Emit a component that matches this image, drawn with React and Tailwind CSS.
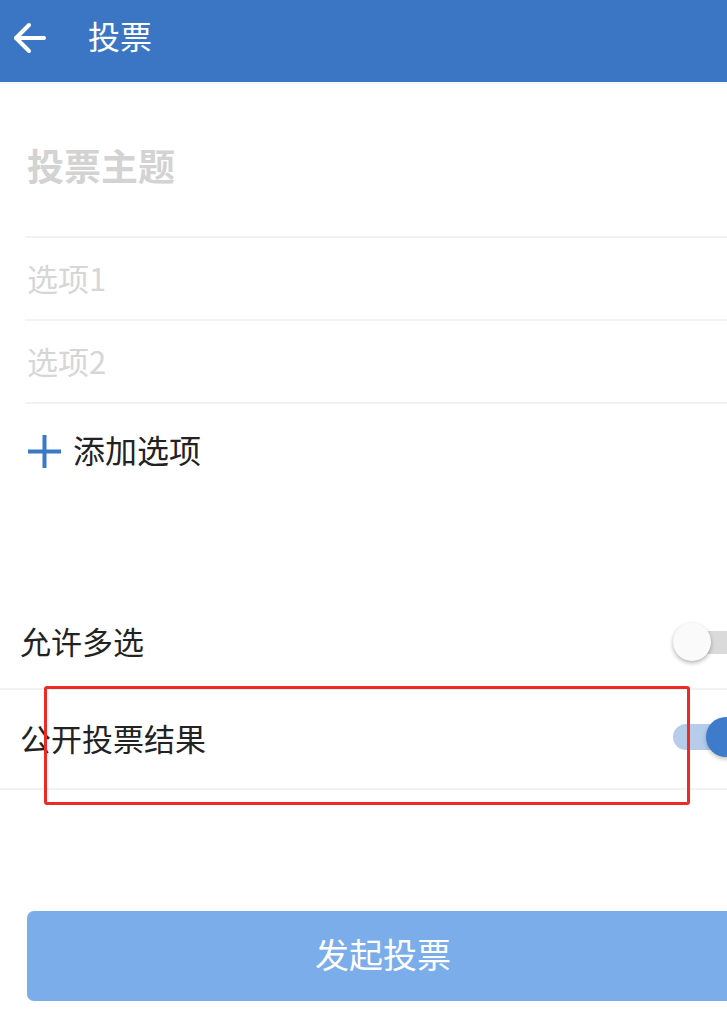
import React from "react";

const font = { fontFamily: '"Noto Sans CJK SC", "Noto Sans", sans-serif' };

function Toggle({ on }) {
  if (on) {
    return (
      <div className="relative h-[40px] w-[74px] shrink-0">
        <div className="absolute left-0 top-[7px] h-[26px] w-[70px] rounded-full bg-[#b5cdeb]" />
        <div className="absolute left-[33px] top-0 h-[40px] w-[40px] rounded-full bg-[#3f7bcb] shadow-[0_2px_4px_rgba(0,0,0,0.25)]" />
      </div>
    );
  }
  return (
    <div className="relative h-[40px] w-[74px] shrink-0">
      <div className="absolute left-[4px] top-[9px] h-[23px] w-[70px] rounded-full bg-[#dadada]" />
      <div className="absolute left-0 top-[1px] h-[38px] w-[38px] rounded-full bg-[#fafafa] shadow-[0_2px_4px_rgba(0,0,0,0.3)]" />
    </div>
  );
}

export default function App() {
  return (
    <div className="relative h-[1024px] w-[727px] overflow-hidden bg-white" style={font}>
      <div className="w-[770px]">
        {/* Header */}
        <div className="flex h-[82px] items-center bg-[#3a76c4] pb-[6px] pl-[13px]">
          <svg width="34" height="32" viewBox="0 0 34 32" fill="none" stroke="white" strokeWidth="4" strokeLinecap="round" strokeLinejoin="round">
            <path d="M31 16H3" />
            <path d="M16 3L3 16L16 29" />
          </svg>
          <span className="ml-[41px] pb-[6px] text-[32px] leading-none text-white">投票</span>
        </div>
        <div className="h-[2px] bg-[#f3f6fa]" />

        {/* Topic */}
        <div className="ml-[25px] border-b-2 border-[#f2f2f2]">
          <div className="flex h-[152px] items-center pl-[2px] pt-[10px] text-[37px] font-bold leading-none text-[#d3d3d3]">
            投票主题
          </div>
        </div>
        <div className="ml-[25px] border-b-2 border-[#f2f2f2]">
          <div className="flex h-[81px] items-center pb-[2px] pl-[2px] text-[31px] leading-none text-[#d6d6d6]">
            选项1
          </div>
        </div>
        <div className="ml-[25px] border-b-2 border-[#f2f2f2]">
          <div className="flex h-[81px] items-center pb-[2px] pl-[2px] text-[31px] leading-none text-[#d6d6d6]">
            选项2
          </div>
        </div>

        {/* Add option */}
        <div className="flex h-[100px] items-center pb-[6px] pl-[28px]">
          <svg width="33" height="33" viewBox="0 0 33 33" className="shrink-0">
            <rect x="0" y="14.5" width="33" height="4" fill="#3a78c8" />
            <rect x="14.5" y="0" width="4" height="33" fill="#3a78c8" />
          </svg>
          <span className="ml-[12px] pb-[4px] text-[32px] leading-none text-[#222]">添加选项</span>
        </div>

        <div className="h-[98px]" />

        {/* Switch rows */}
        <div className="flex h-[88px] items-center justify-between border-b-2 border-[#f2f2f2] pb-[6px] pl-[20px] pr-[23px]">
          <span className="pb-[3px] text-[31px] leading-none text-[#222]">允许多选</span>
          <Toggle on={false} />
        </div>
        <div className="flex h-[100px] items-center justify-between border-b-2 border-[#f2f2f2] pb-[4px] pl-[20px] pr-[23px]">
          <span className="text-[31px] leading-none text-[#222]">公开投票结果</span>
          <Toggle on />
        </div>

        <div className="h-[121px]" />

        {/* Button */}
        <div className="ml-[27px] flex h-[90px] w-[712px] items-center justify-center rounded-[7px] bg-[#7aadea] pb-[4px]">
          <span className="text-[34px] leading-none text-white">发起投票</span>
        </div>
      </div>

      {/* Annotation overlay */}
      <div className="absolute left-[44px] top-[686px] h-[119px] w-[646px] rounded-[3px] border-[3px] border-[#ee2a24]" />
    </div>
  );
}
